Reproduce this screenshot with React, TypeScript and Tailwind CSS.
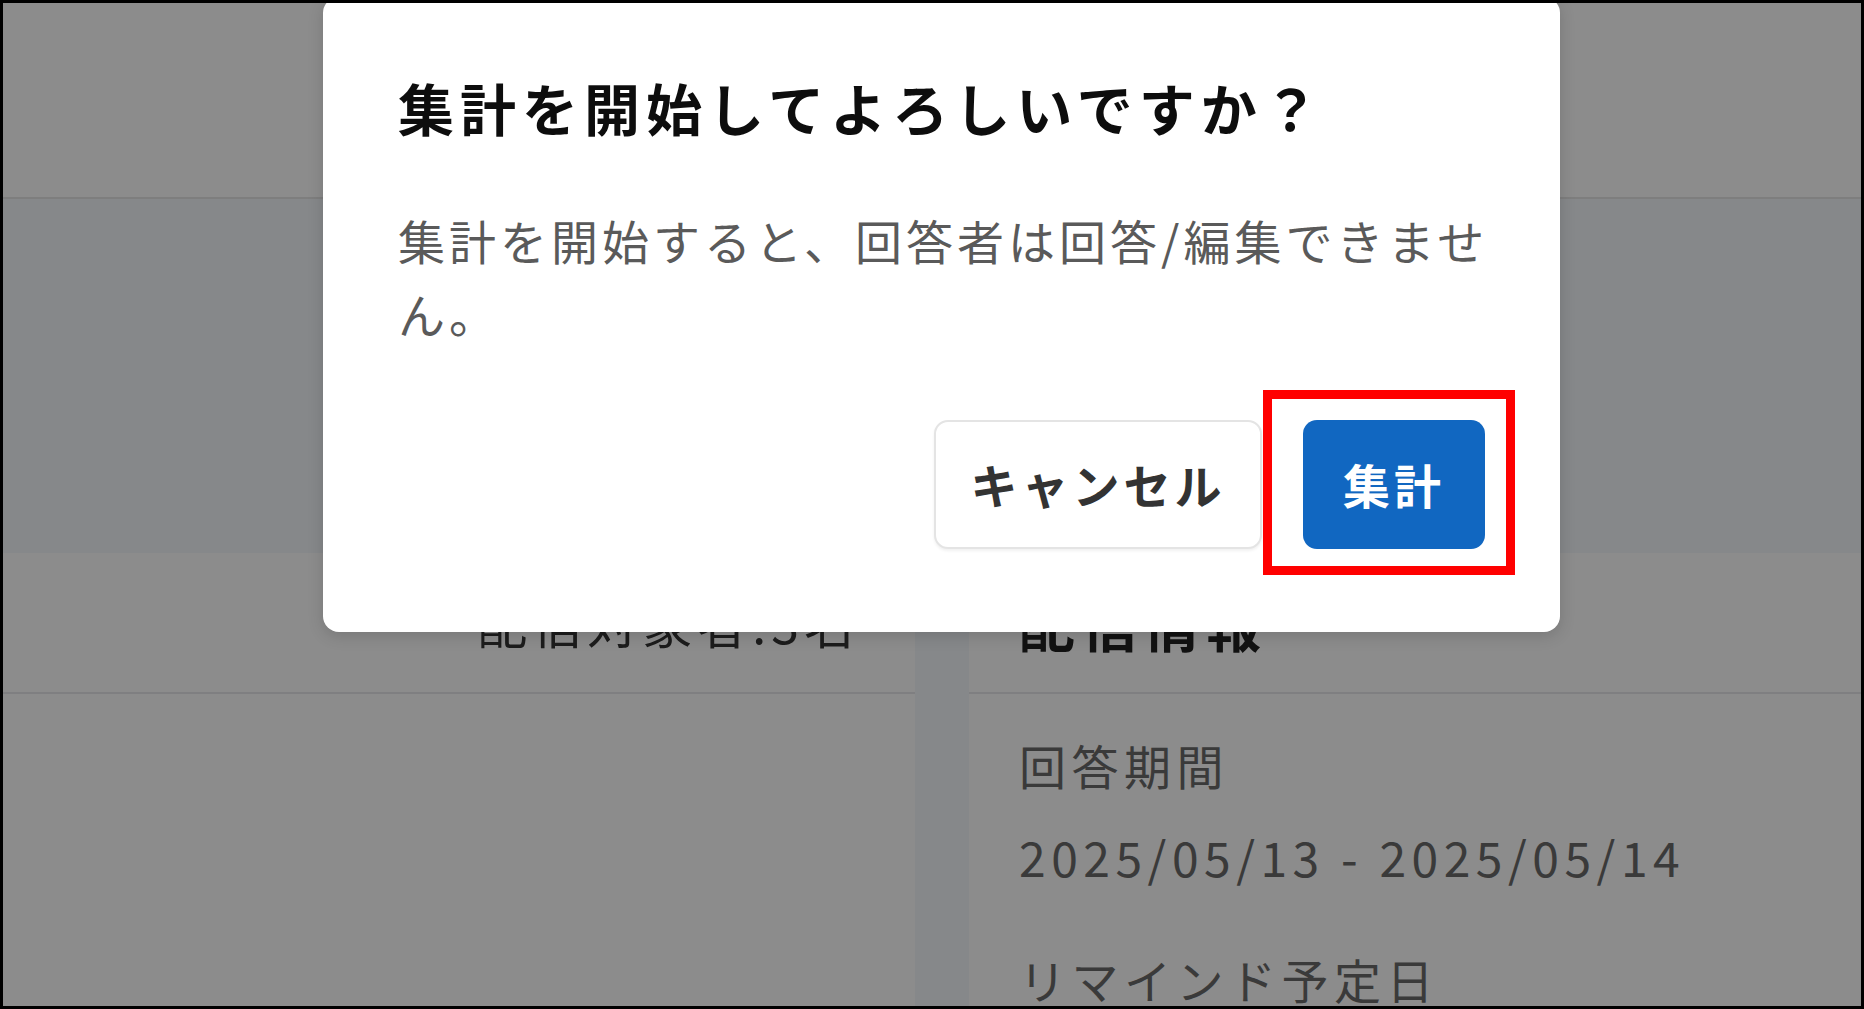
import React from "react";

const FONT = { fontFamily: '"Noto Sans CJK JP", "Noto Sans", sans-serif' };

function InfoRow({ label, value }: { label: string; value?: string }) {
  return (
    <div className="flex flex-col">
      <div className="text-[47px] leading-[70px] tracking-[5.5px] text-[#6b6b6b]">{label}</div>
      {value && (
        <div className="mt-[21px] text-[48px] leading-[70px] tracking-[5.5px] text-[#6b6b6b]">{value}</div>
      )}
    </div>
  );
}

export default function App() {
  return (
    <div className="w-[1864px] h-[1009px] bg-black p-[3px]" style={FONT}>
      <div className="relative w-full h-full overflow-hidden bg-[#f5f7fc]">
        {/* 背景ページ */}
        <div className="h-[196px] bg-white border-b-2 border-[#e6e6e6]" />
        <div className="mt-[354px] flex gap-[54px]">
          <div className="w-[912px] bg-white">
            <div className="h-[141px] flex items-center justify-end pr-[56px] border-b-2 border-[#e8e8ec]">
              <span className="text-[50px] tracking-[5px] text-[#333]">配信対象者:3名</span>
            </div>
          </div>
          <div className="flex-1 bg-white min-h-[460px]">
            <div className="h-[141px] flex items-center pl-[50px] border-b-2 border-[#e8e8ec]">
              <span className="text-[56px] font-bold tracking-[6px] text-[#222]">配信情報</span>
            </div>
            <div className="pl-[50px] pt-[36px] flex flex-col gap-[53px]">
              <InfoRow label="回答期間" value="2025/05/13 - 2025/05/14" />
              <InfoRow label="リマインド予定日" />
            </div>
          </div>
        </div>

        {/* オーバーレイ */}
        <div className="absolute inset-0 bg-black/45" />

        {/* ダイアログ */}
        <div className="absolute left-[320px] top-[-6px] w-[1237px] rounded-[16px] bg-white shadow-[0_4px_16px_rgba(0,0,0,0.15)] pl-[75px] pr-[75px] pt-[70px] pb-[83px]">
          <h2 className="text-[56px] leading-[80px] font-bold tracking-[6px] text-[#0d0d0d]">
            集計を開始してよろしいですか？
          </h2>
          <p className="mt-[56px] w-[1110px] text-[47px] leading-[73px] tracking-[4px] text-[#5a5a5a]">
            集計を開始すると、回答者は回答/編集できません。
          </p>
          <div className="mt-[71px] flex justify-end gap-[41px]">
            <button className="w-[328px] h-[129px] rounded-[14px] border-2 border-[#e4e4e4] bg-white shadow-[0_2px_3px_rgba(0,0,0,0.06)] text-[47px] font-bold tracking-[4px] text-[#333]">
              キャンセル
            </button>
            <button className="w-[182px] h-[129px] rounded-[14px] bg-[#1167c1] text-[47px] font-bold tracking-[4px] text-white">
              集計
            </button>
          </div>
        </div>

        {/* 注釈の赤枠 */}
        <div className="absolute left-[1260px] top-[387px] w-[252px] h-[185px] border-[9px] border-[#ff0000]" />
      </div>
    </div>
  );
}
